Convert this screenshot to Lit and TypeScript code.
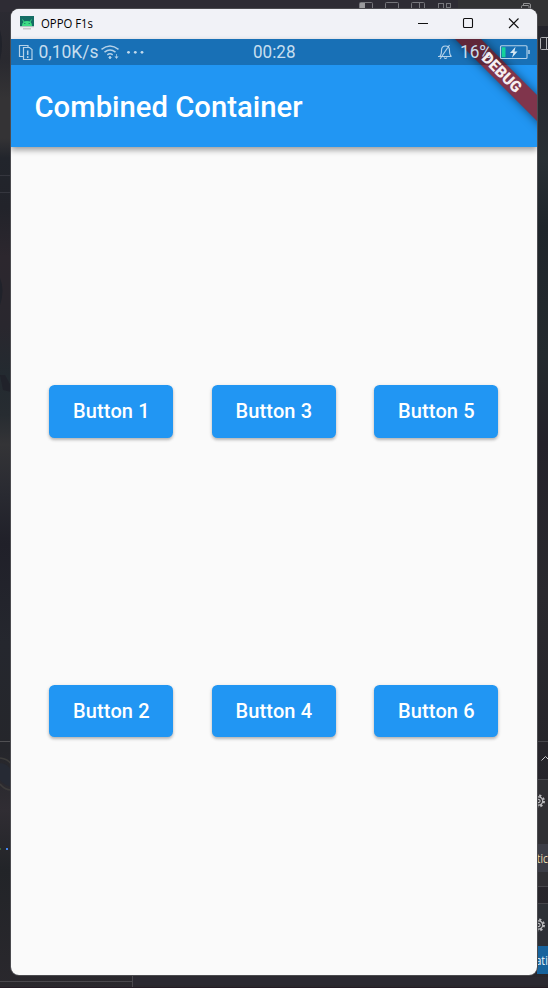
import { LitElement, html, css, svg } from "lit";
import { customElement, property } from "lit/decorators.js";

@customElement("desktop-backdrop")
class DesktopBackdrop extends LitElement {
  static styles = css`
    :host { position: absolute; inset: 0; }
    svg { display: block; }
    text { font: 12px "Open Sans", sans-serif; }
  `;
  render() {
    const gear = (y: number) => svg`
      <g transform="translate(538.500 ${y})" fill="none" stroke="#b9b9bc">
        <circle r="4.200" stroke-width="1.200"></circle>
        <circle r="5.500" stroke-width="2" stroke-dasharray="2.200 2.120"></circle>
        <circle r="1.600" stroke-width="1.100"></circle>
      </g>`;
    return html`<svg width="548" height="988" viewBox="0 0 548 988">
      <defs>
        <linearGradient id="l" x1="0" y1="0" x2="0" y2="1">
          <stop offset="0" stop-color="#2c2b33"></stop><stop offset=".06" stop-color="#29292f"></stop>
          <stop offset=".1" stop-color="#343335"></stop><stop offset=".14" stop-color="#343335"></stop>
          <stop offset=".16" stop-color="#22252c"></stop><stop offset=".21" stop-color="#22232a"></stop>
          <stop offset=".26" stop-color="#2c272e"></stop><stop offset=".33" stop-color="#29272e"></stop>
          <stop offset=".38" stop-color="#232a30"></stop><stop offset=".42" stop-color="#272c31"></stop>
          <stop offset=".45" stop-color="#343437"></stop><stop offset=".5" stop-color="#292a31"></stop>
          <stop offset=".55" stop-color="#202029"></stop><stop offset=".65" stop-color="#25272e"></stop>
          <stop offset=".76" stop-color="#25262b"></stop><stop offset=".82" stop-color="#302d33"></stop>
          <stop offset=".88" stop-color="#222428"></stop><stop offset="1" stop-color="#2a282d"></stop>
        </linearGradient>
        <linearGradient id="r" x1="0" y1="0" x2="0" y2="1">
          <stop offset="0" stop-color="#222229"></stop><stop offset=".1" stop-color="#272930"></stop>
          <stop offset=".16" stop-color="#292f34"></stop><stop offset=".23" stop-color="#1f252b"></stop>
          <stop offset=".36" stop-color="#242a2e"></stop><stop offset=".45" stop-color="#24222a"></stop>
          <stop offset=".6" stop-color="#2a292e"></stop><stop offset=".8" stop-color="#25242a"></stop>
          <stop offset="1" stop-color="#29272d"></stop>
        </linearGradient>
      </defs>
      <rect width="548" height="988" fill="url(#l)"></rect>
      <rect x="530" width="18" height="988" fill="url(#r)"></rect>
      <rect width="548" height="12" fill="#2e2c34"></rect>
      <rect x="458" width="90" height="26" fill="#323234"></rect>
      <path d="M0 30Q4 44 0 60M0 142L11 134M0 278Q5 290 0 305M0 375H5L11 386V392L3 390Z" fill="#20222a"></path>
      <path d="M0 175.500H11M0 192.500H11" stroke="#35363e"></path>
      <path d="M0 741.500H11" stroke="#505053"></path>
      <path d="M0 763Q8 764 11 770V787Q4 785 0 780Z" fill="#262a34"></path>
      <path d="M0 758Q8 759 11 764M0 784Q5 790 11 790" stroke="#3d3c3b" stroke-width="1.500" fill="none"></path>
      <path d="M0 848h1v2h-1z" fill="#3d6539"></path><path d="M6 848h2v2h-2z" fill="#4587ef"></path>
      <g fill="none" stroke="#77777c">
        <rect x="359.500" y="2.500" width="13" height="12" rx="1"></rect><path d="M360 3h5v11h-5z" fill="#9a9a9d" stroke="none"></path>
        <rect x="385.500" y="2.500" width="13" height="12" rx="1"></rect>
        <rect x="411.500" y="2.500" width="13" height="12" rx="1"></rect><path d="M419.500 3v11"></path>
        <rect x="438.500" y="3.500" width="5" height="10"></rect><rect x="446.500" y="3.500" width="4" height="4"></rect>
        <path d="M475 8.500H485M521.500 14V6.500q0-1 1-1H528q1 0 1 1V14M523.500 5V3.500H529q1.500 0 1.500 1.500v8" stroke="#929294"></path>
        <rect x="540.500" y="37.500" width="12" height="12" rx="1" stroke="#b0b0b3"></rect><path d="M546.500 38v12" stroke="#b0b0b3"></path>
      </g>
      <path d="M537 780h11v106h-11z" fill="#302f33"></path>
      <path d="M537 741.500H548M537 779.500H548M537 886.500H548M537 903.500H548" stroke="#46464b"></path>
      <path d="M541.500 760.500l4-4 4 4" stroke="#c5c5c8" fill="none"></path>
      <path d="M537 844h11v28h-11z" fill="#3c3d46"></path>
      <path d="M537 904h11v42h-11z" fill="#2d3036"></path>
      <path d="M537 946h11v28h-11z" fill="#17639d"></path>
      ${gear(801)}${gear(925)}
      <text x="536.800" y="863" textLength="11" lengthAdjust="spacingAndGlyphs" fill="#e8dcb2">tic</text>
      <text x="535.500" y="965" textLength="12.300" lengthAdjust="spacingAndGlyphs" fill="#eaf3fa">ati</text>
      <path d="M133 977h415v8H133z" fill="#2b2931"></path>
      <path d="M0 981.500H132.500M132.500 976V988" stroke="#4a484d" fill="none"></path>
      <path d="M0 987.500H548" stroke="#241b25"></path>
    </svg>`;
  }
}

@customElement("title-bar")
class TitleBar extends LitElement {
  static styles = css`
    :host { display: flex; align-items: center; height: 30px; background: #f1f2f7; box-sizing: border-box; padding-left: 9px;
      font: 12px/16px "Open Sans", sans-serif; }
    .name { margin-left: 7px; flex: 1; }
    svg { display: block; }
  `;
  render() {
    return html`<svg width="14" height="16" viewBox="0 0 14 16">
        <path d="M0 0h14v11H0z" fill="#156d65"></path><path d="M2 10Q2 5 7 5t5 5z" fill="#3ddc84"></path>
        <path d="M4 6L2.500 3.500M10 6l1.500-2.500" stroke="#3ddc84" stroke-width=".9"></path>
        <path d="M4.300 7h1v1h-1zM8.700 7h1v1h-1z" fill="#156d65"></path>
        <path d="M0 10.300h14v1.500H0z" fill="#e4e4e4"></path><path d="M3 12h8v1.500H3z" fill="#c6c6c8"></path>
      </svg>
      <span class="name"><svg width="56" height="16"><text x="0" y="12" textLength="52" lengthAdjust="spacingAndGlyphs" fill="#000">OPPO F1s</text></svg></span>
      <svg width="122" height="30" viewBox="0 0 122 30" fill="none" stroke="#111" stroke-width="1.100">
        <path d="M3 14.500h10M94 9.500l9.500 9.500M103.500 9.500L94 19"></path>
        <rect x="48.500" y="9.500" width="9" height="9" rx="1"></rect>
      </svg>`;
  }
}

@customElement("status-bar")
class StatusBar extends LitElement {
  static styles = css`
    :host { display: block; position: absolute; top: 30px; left: 0; right: 0; background: rgba(0, 0, 0, .25); height: 26px; z-index: 2; }
    svg { display: block; }
    text { font: 17.500px Roboto, sans-serif; fill: #c6deef; }
  `;
  render() {
    return html`<svg width="526" height="26" viewBox="0 0 526 26" fill="none" stroke="#b5d2e9" stroke-width="1.150">
      <path d="M12 17.500H8.500V6.500H17V8.500M12.500 8.500H18.500L21 10.500V20.500H12.500z" stroke-width="1.200"></path>
      <path d="M16.700 11.500V16M16.700 17.300V19" stroke-width="1.500"></path>
      <text x="27.500" y="19.300" textLength="60" lengthAdjust="spacingAndGlyphs" stroke="none">0,10K/s</text>
      <path d="M90.500 10.300Q99 3.500 107.500 10.300M93.500 13.200Q99 8.800 104.500 13.200M96.300 15.800Q99 13.700 101.700 15.800" stroke-width="1.500"></path>
      <path d="M97.700 18.500L99 20l1.300-1.500L99 17zM105.500 15v4M104 17.500l1.500 2 1.500-2" fill="#b5d2e9" stroke-width=".7"></path>
      <g fill="#c2d9eb" stroke="none"><circle cx="117.500" cy="13.300" r="1.400"></circle><circle cx="124.300" cy="13.300" r="1.400"></circle><circle cx="131" cy="13.300" r="1.400"></circle></g>
      <text x="242" y="19.300" textLength="42.500" lengthAdjust="spacingAndGlyphs" stroke="none">00:28</text>
      <path d="M427 17.500h13.500M428.500 17.500q2-1.500 2-6Q430.500 7 434.500 7t4 4.500q0 4.500 2 6M433 18.500q1.500 2 3 0M438.500 6L429 20"></path>
      <text x="449" y="19.300" textLength="32" lengthAdjust="spacingAndGlyphs" stroke="none">16%</text>
      <rect x="489.500" y="6.700" width="26.500" height="12.800" rx="1"></rect><path d="M518 11v4" stroke-width="1.500"></path>
      <path d="M490.800 8.200h3.700v10h-3.700z" fill="#16d29a" stroke="none"></path>
      <path d="M504.500 7.800l-5.500 6.200h3.300L501 18.700l5.500-6.200H503.500z" fill="#d5e7f3" stroke="none"></path>
    </svg>`;
  }
}

@customElement("debug-banner")
class DebugBanner extends LitElement {
  static styles = css`
    :host { position: absolute; top: 30px; right: 0; width: 110px; height: 110px; overflow: hidden; z-index: 1; }
    :host([front]) { z-index: 3; }
    svg { display: block; }
    .band { filter: drop-shadow(0 0 5px rgba(0, 0, 0, .5)); }
    text { font: 900 15.600px Roboto, sans-serif; fill: #f6eef1; }
  `;
  @property({ type: Boolean, reflect: true }) front = false;
  render() {
    return html`<svg width="110" height="110" viewBox="0 0 110 110">${this.front
      ? svg`<g transform="translate(75 33.500) rotate(45)"><text x="-24.500" y="5.500" textLength="49" lengthAdjust="spacingAndGlyphs">DEBUG</text></g>`
      : svg`<path class="band" d="M8-20L140 112V86L34-20z" fill="#80354c"></path>`}</svg>`;
  }
}

@customElement("raised-button")
class RaisedButton extends LitElement {
  static styles = css`
    button { display: block; width: 124px; height: 52.500px; border: 0; border-radius: 5.500px; padding: 0; background: #2196f3; color: #fff;
      font: 500 20px/53px Roboto, sans-serif; letter-spacing: .12px; box-shadow: 0 2px 3px rgba(0, 0, 0, .22), 0 1px 4px rgba(0, 0, 0, .1); }
  `;
  render() {
    return html`<button><slot></slot></button>`;
  }
}

@customElement("app-root")
class AppRoot extends LitElement {
  static styles = css`
    :host { display: block; position: relative; width: 548px; height: 988px; overflow: hidden; box-sizing: border-box; padding: 9px 11px 13px; }
    .window { position: relative; height: 966px; border-radius: 8px; overflow: hidden; background: #fafafa; display: flex; flex-direction: column; }
    .frame { position: relative; border-radius: 8px; box-shadow: 0 0 0 1px #4b4b4f; }
    header { height: 108px; box-sizing: border-box; padding: 26px 0 0 23.500px; background: #2196f3; color: #fff; flex: none;
      font: 500 29.250px/84px Roboto, sans-serif; box-shadow: 0 3px 6px rgba(0, 0, 0, .38); }
    .title { display: block; }
    main { flex: 1; display: grid; grid-template-columns: repeat(3, 124px); grid-auto-rows: 52.500px; column-gap: 38.500px; row-gap: 247px;
      padding: 238px 0 0 38.400px; }
  `;
  render() {
    return html`<desktop-backdrop></desktop-backdrop>
      <div class="frame"><div class="window">
        <title-bar></title-bar>
        <header><span class="title">Combined Container</span></header>
        <status-bar></status-bar>
        <debug-banner></debug-banner>
        <debug-banner front></debug-banner>
        <main>${[1, 3, 5, 2, 4, 6].map((n) => html`<raised-button>Button ${n}</raised-button>`)}</main>
      </div></div>`;
  }
}
